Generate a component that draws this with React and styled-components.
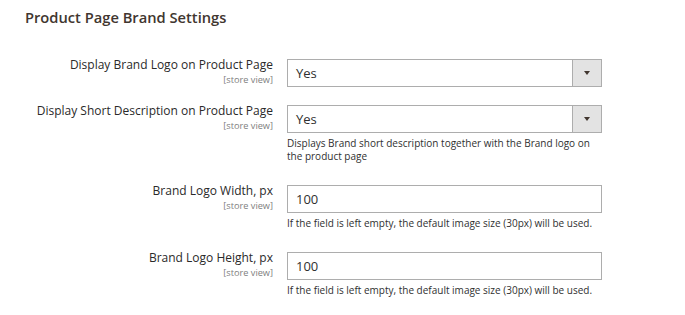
import React from 'react'
import styled, { createGlobalStyle } from 'styled-components';

let GlobalStyle = createGlobalStyle`
    body {
        margin:0;
        background:#ffffff;
        font-family:"Open Sans", "Liberation Sans", sans-serif;
        color:#303030;
    }
`;

let Page = styled.div`
    display:flex;
    flex-direction:column;
    padding:6px 0 0 25px;
`;

let Title = styled.h2`
    margin:0 0 31px 0;
    font-size:14.7px;
    line-height:22px;
    font-weight:600;
    color:#41362f;
`;

let Row = styled.div`
    display:grid;
    grid-template-columns:248px 315px;
    column-gap:14px;
    margin-bottom:${props => props.spacing}px;
`;

let LabelBox = styled.div`
    display:flex;
    flex-direction:column;
    align-items:flex-end;
    text-align:right;
    margin-top:-2px;
`;

let LabelText = styled.span`
    font-size:12px;
    line-height:16px;
    font-weight:400;
    color:#2a2a2a;
    white-space:nowrap;
`;

let Scope = styled.span`
    font-size:9.2px;
    line-height:13px;
    color:#808080;
`;

let Control = styled.div`
    display:flex;
    flex-direction:column;
`;

let SelectBox = styled.div`
    display:flex;
    height:28px;
    box-sizing:border-box;
    border:1px solid #adadad;
    background:#ffffff;
`;

let SelectValue = styled.div`
    flex:1;
    display:flex;
    align-items:center;
    padding-left:8px;
    font-size:13px;
    color:#303030;
`;

let ArrowButton = styled.div`
    width:28px;
    display:flex;
    align-items:center;
    justify-content:center;
    background:#e3e3e3;
    border-left:1px solid #adadad;
`;

let Arrow = styled.span`
    width:0;
    height:0;
    border-left:3.5px solid transparent;
    border-right:3.5px solid transparent;
    border-top:4px solid #41362f;
`;

let TextInput = styled.input`
    height:28px;
    box-sizing:border-box;
    border:1px solid #adadad;
    padding:0 8px;
    font-family:inherit;
    font-size:13px;
    color:#303030;
    outline:none;
`;

let Note = styled.div`
    margin-top:4px;
    font-size:10px;
    line-height:13px;
    color:#303030;
`;

let Field = ({ label, spacing, children, note }) => (
    <Row spacing={spacing}>
        <LabelBox>
            <LabelText>{label}</LabelText>
            <Scope>[store view]</Scope>
        </LabelBox>
        <Control>
            {children}
            {note && <Note>{note}</Note>}
        </Control>
    </Row>
)

let Select = ({ value }) => (
    <SelectBox>
        <SelectValue>{value}</SelectValue>
        <ArrowButton><Arrow /></ArrowButton>
    </SelectBox>
)

let App = () => {
    let emptyNote = 'If the field is left empty, the default image size (30px) will be used.';
    return (
        <Page>
            <GlobalStyle />
            <Title>Product Page Brand Settings</Title>
            <Field label="Display Brand Logo on Product Page" spacing={18}>
                <Select value="Yes" />
            </Field>
            <Field label="Display Short Description on Product Page" spacing={22}
                note={<>Displays Brand short description together with the Brand logo on<br />the product page</>}>
                <Select value="Yes" />
            </Field>
            <Field label="Brand Logo Width, px" spacing={22} note={emptyNote}>
                <TextInput defaultValue="100" />
            </Field>
            <Field label="Brand Logo Height, px" spacing={0} note={emptyNote}>
                <TextInput defaultValue="100" />
            </Field>
        </Page>
    )
}

export default App;
